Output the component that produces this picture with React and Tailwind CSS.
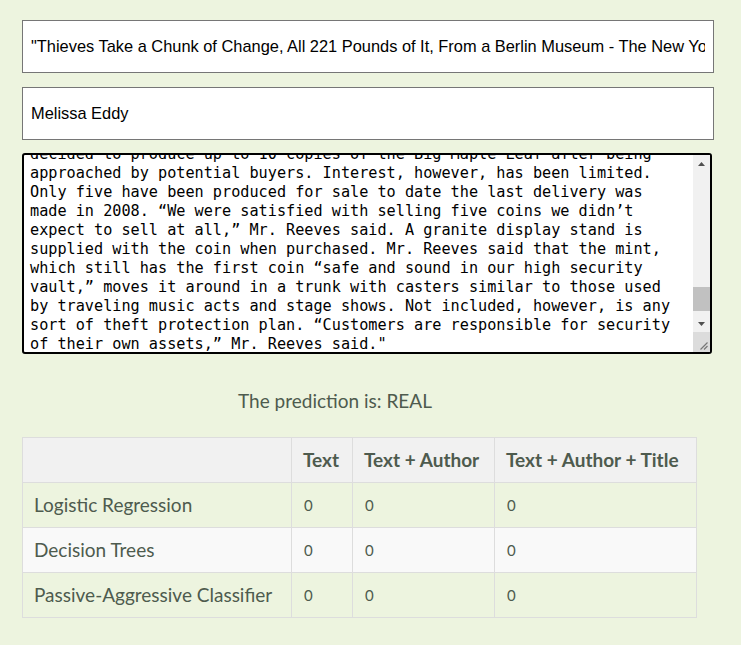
import { useEffect, useRef } from "react";

const title =
  "\"Thieves Take a Chunk of Change, All 221 Pounds of It, From a Berlin Museum - The New York Times\"";

// first part wraps by itself, the visible tail is broken by hand
const lead =
  "\"BERLIN — It was early on Monday morning when thieves broke into the Bode Museum in Berlin, a neo-Baroque landmark on the tip of the city’s Museum Island, and made off with a 221-pound gold coin known as the Big Maple Leaf. The coin, which has a face value of one million Canadian dollars and is made of 99.999 percent pure gold, was worth about $4 million at current market prices, according to the police. Investigators said the thieves appeared to have entered the museum through a window at the back of the building at about 3:30 a.m., using a ladder that was later found lying on the nearby tracks of the S-Bahn commuter rail line. How they managed to carry off such a heavy object remained unclear, although the police said they believed that the thieves had used a wheelbarrow or a rolling board to move the coin along the tracks before crossing the Spree River. “This was clearly not a spontaneous act,” said a police spokesman, Stefan Petersen, who added that the department’s special unit for property crimes had taken over the investigation. The coin had been on loan to the museum since 2010 from a private owner, whose identity has not been made public. It was displayed in a special case in the museum’s coin cabinet, one of the largest numismatic collections in the world, with more than 540,000 objects ranging from the beginnings of coinage in the seventh century B.C. to the present. Museum officials declined to comment on the security arrangements, citing the continuing investigation. The Big Maple Leaf was first produced by the Royal Canadian Mint in 2007 to showcase a new technology for refining gold. It was recognized by Guinness World Records as the world’s purest gold coin, and at more than 20 inches in diameter and over an inch thick, it was among the largest. Bearing the image of Queen Elizabeth II on one side and maple leaves on the other, the coin was listed by the mint as having a face value of one million Canadian dollars. Alex Reeves, a spokesman for the mint, said the company had originally planned to produce just one coin but";

const tail = [
  "decided to produce up to 10 copies of the Big Maple Leaf after being",
  "approached by potential buyers. Interest, however, has been limited.",
  "Only five have been produced for sale to date the last delivery was",
  "made in 2008. “We were satisfied with selling five coins we didn’t",
  "expect to sell at all,” Mr. Reeves said. A granite display stand is",
  "supplied with the coin when purchased. Mr. Reeves said that the mint,",
  "which still has the first coin “safe and sound in our high security",
  "vault,” moves it around in a trunk with casters similar to those used",
  "by traveling music acts and stage shows. Not included, however, is any",
  "sort of theft protection plan. “Customers are responsible for security",
  "of their own assets,” Mr. Reeves said.\"",
];

const rows = [
  { name: "Logistic Regression", bg: "" },
  { name: "Decision Trees", bg: "bg-[#f9f9f9]" },
  { name: "Passive-Aggressive Classifier", bg: "" },
];

function Arrow({ down }) {
  return (
    <svg width="7" height="4" viewBox="0 0 7 4">
      <path d={down ? "M0 0h7L3.5 4z" : "M0 4h7L3.5 0z"} fill="#505050" />
    </svg>
  );
}

// classic scrollbar painted over the textarea (headless hides the real one)
function FakeScrollbar() {
  return (
    <div className="pointer-events-none absolute top-[2px] bottom-[2px] right-[2px] flex w-[17px] flex-col bg-[#f1f1f1]">
      <div className="flex h-[17px] items-center justify-center">
        <Arrow />
      </div>
      <div className="flex-1">
        <div className="mt-[115px] h-[24px] w-full bg-[#c1c1c1]" />
      </div>
      <div className="flex h-[17px] items-center justify-center">
        <Arrow down />
      </div>
      <div className="flex h-[20px] items-end justify-end bg-[#dcdcdc] p-[2px]">
        <svg width="9" height="9" viewBox="0 0 9 9">
          <path d="M8.5 1.5L1.5 8.5M8.5 5L5 8.5" stroke="#777" strokeWidth="1.2" />
        </svg>
      </div>
    </div>
  );
}

export default function App() {
  const area = useRef(null);

  // show the end of the article, as in the screenshot
  useEffect(() => {
    const el = area.current;
    if (el) el.scrollTop = el.scrollHeight - el.clientHeight - 2;
  }, []);

  const inp =
    "w-full h-[53px] border border-[#767676] bg-white px-[8px] text-[16.4px] text-black outline-none font-['Liberation_Sans',Arial,sans-serif]";

  return (
    <div className="min-h-[645px] w-full bg-[#edf4df] pt-[20px] px-[22px] font-['Lato',sans-serif] text-[#4e5b4e]">
      <div className="w-[692px] flex flex-col">
        <input className={inp} defaultValue={title} />
        <input className={inp + " mt-[14px]"} defaultValue="Melissa Eddy" />

        <div className="relative mt-[13px] h-[201px] w-[690px]">
          <textarea
            ref={area}
            className="block h-full w-full resize-none overflow-hidden rounded-[3px] border-2 border-black bg-white pl-[6px] pr-[20px] pt-[2px] pb-0 text-[15.2px] leading-[19px] text-black outline-none font-['DejaVu_Sans_Mono',monospace]"
            defaultValue={lead + "\n" + tail.join("\n")}
          />
          <FakeScrollbar />
        </div>

        <p className="mt-[36px] pr-[66px] text-center text-[19px] leading-[22px]">
          The prediction is: REAL
        </p>
      </div>

      <table className="mt-[25px] w-[675px] border-collapse text-[19px] leading-[24px]">
        <thead>
          <tr className="bg-[#f1f1f1]">
            <th className="w-[269px] border border-[#dddddd] px-[11px] py-[10px]"></th>
            <th className="w-[61px] border border-[#dddddd] px-[11px] py-[10px] text-left font-bold">Text</th>
            <th className="w-[142px] border border-[#dddddd] px-[11px] py-[10px] text-left font-bold">Text + Author</th>
            <th className="border border-[#dddddd] px-[11px] py-[10px] text-left font-bold">Text + Author + Title</th>
          </tr>
        </thead>
        <tbody>
          {rows.map((r) => (
            <tr key={r.name} className={r.bg}>
              <td className="border border-[#dddddd] px-[11px] py-[10px]">{r.name}</td>
              <td className="border border-[#dddddd] px-[12px] py-[10px] text-[15px]">0</td>
              <td className="border border-[#dddddd] px-[12px] py-[10px] text-[15px]">0</td>
              <td className="border border-[#dddddd] px-[12px] py-[10px] text-[15px]">0</td>
            </tr>
          ))}
        </tbody>
      </table>
    </div>
  );
}
